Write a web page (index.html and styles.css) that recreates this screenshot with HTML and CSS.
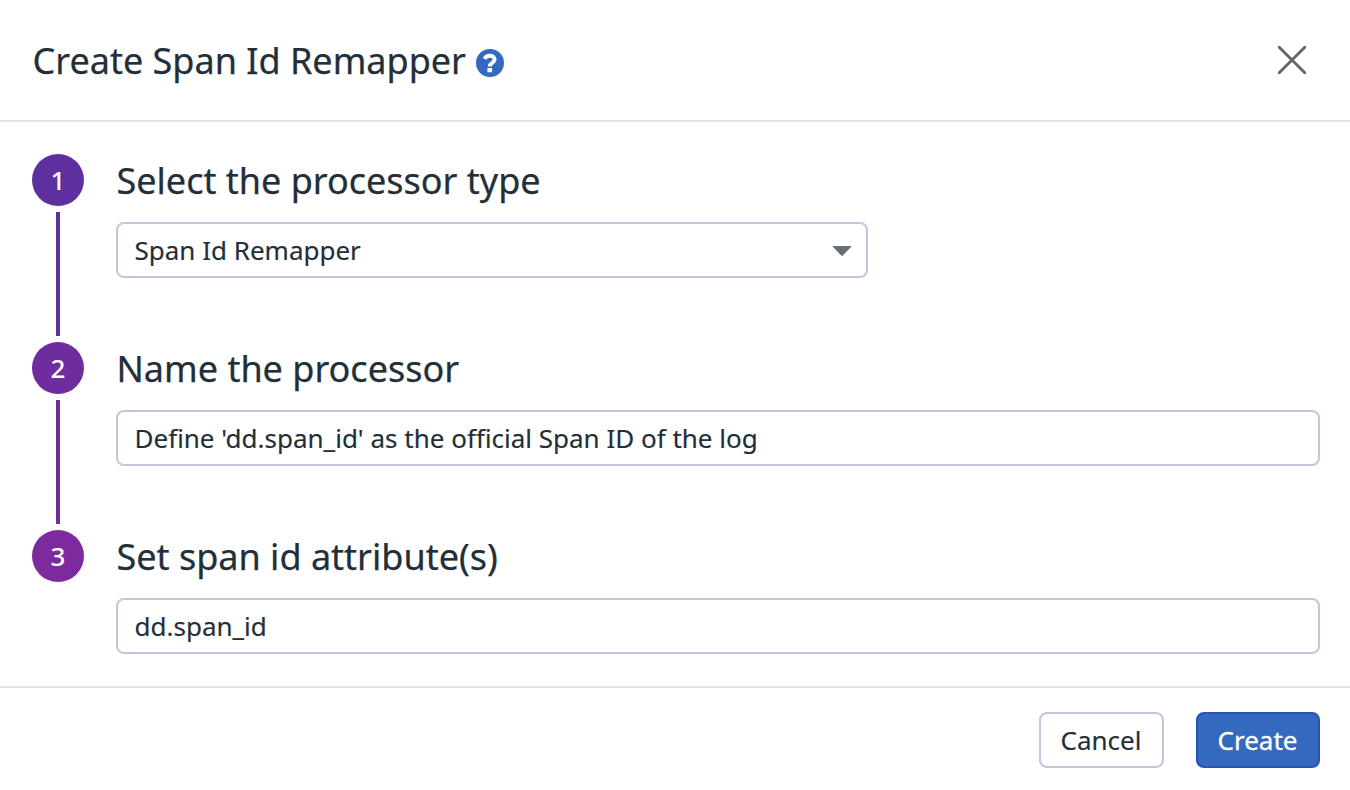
FILE: index.html
```
<!DOCTYPE html>
<html lang="en">
<head>
<meta charset="utf-8">
<title>Create Span Id Remapper</title>
<link rel="stylesheet" href="styles.css">
</head>
<body>
<div class="modal">
  <header class="header">
    <h1 class="title">Create Span Id Remapper</h1>
    <svg class="help" viewBox="0 0 28 28"><circle cx="14" cy="14" r="14" fill="#3369bf"/><path d="M8.6 9.8C9.6 7.6 11.4 6.7 13.8 6.7c2.8 0 4.8 1.5 4.8 3.8 0 3.4-4.9 3.2-4.9 6.9" fill="none" stroke="#fff" stroke-width="4"/><rect x="11.4" y="18.9" width="4.7" height="4.4" rx=".4" fill="#fff"/></svg>
    <svg class="close" viewBox="0 0 28 28"><path d="M1.2 1.2l25.6 25.6M26.8 1.2L1.2 26.8" stroke="#626a70" stroke-width="2.9" stroke-linecap="round"/></svg>
  </header>
  <main class="steps">
    <section class="step">
      <div class="rail"><span class="num num-1">1</span><span class="line line-1"></span></div>
      <div class="content">
        <h2 class="heading">Select the processor type</h2>
        <div class="field select">Span Id Remapper<svg class="caret" viewBox="0 0 20 12"><path d="M1.2 1h17.6q.6.2.2.9L10.8 10.6q-.8.6-1.6 0L1 1.9q-.4-.7.2-.9z" fill="#697177"/></svg></div>
      </div>
    </section>
    <section class="step">
      <div class="rail"><span class="num num-2">2</span><span class="line line-2"></span></div>
      <div class="content">
        <h2 class="heading">Name the processor</h2>
        <div class="field">Define 'dd.span_id' as the official Span ID of the log</div>
      </div>
    </section>
    <section class="step">
      <div class="rail"><span class="num num-3">3</span></div>
      <div class="content">
        <h2 class="heading">Set span id attribute(s)</h2>
        <div class="field">dd.span_id</div>
      </div>
    </section>
  </main>
  <footer class="footer">
    <button class="button">Cancel</button>
    <button class="button primary">Create</button>
  </footer>
</div>
</body>
</html>
```
FILE: styles.css
```
* { box-sizing: border-box; }
body { margin: 0; background: #fff; color: #232f38; font-family: "Noto Sans", sans-serif; -webkit-text-stroke: 0.25px; }
.modal { width: 1350px; height: 790px; display: flex; flex-direction: column; }
.header { height: 122px; display: flex; align-items: center; padding: 4px 44px 0 32.5px; border-bottom: 2px solid #e0e4e9; }
.title { margin: -2px 0 0; font-size: 36px; line-height: 48px; font-weight: 400; white-space: nowrap; }
.help { width: 28px; height: 28px; margin: 2px 0 0 10.5px; }
.close { width: 28px; height: 28px; margin: -4px 0 0 auto; }
.steps { height: 564px; padding: 32px 30px 0 32px; }
.step { height: 188px; display: flex; gap: 32px; }
.rail { width: 52px; display: flex; flex-direction: column; align-items: center; gap: 6px; }
.num { width: 52px; height: 52px; border-radius: 50%; color: #fff; font-size: 26px; line-height: 52px; text-align: center; font-weight: 500; -webkit-text-stroke: 0; }
.num-1 { background: #5d2f9f; }
.num-2 { background: #6f2c9f; }
.num-3 { background: #7d2a9f; }
.line { width: 4px; height: 124px; }
.line-1 { background: #5d2f9f; }
.line-2 { background: #6f2c9f; }
.content { flex: 1; }
.heading { margin: 2px 0 16px; padding-left: 0.5px; font-size: 36px; line-height: 50px; font-weight: 400; }
.field { height: 56px; border: 2px solid #c3c7de; border-radius: 8px; padding: 0 16.5px; font-size: 26px; line-height: 52px; white-space: nowrap; -webkit-text-stroke: 0.15px; }
.select { width: 752px; display: flex; justify-content: space-between; align-items: center; padding-right: 14px; }
.caret { width: 20px; height: 12px; margin-top: 2px; }
.footer { height: 104px; border-top: 2px solid #e0e4e9; padding: 24px 30px 0; display: flex; justify-content: flex-end; gap: 32px; }
.button { width: 125px; height: 56px; padding: 0 1px 0 0; border: 2px solid #c3c7de; border-radius: 8px; background: #fff; color: #232f38; font: 26px/52px "Noto Sans", sans-serif; -webkit-text-stroke: 0.15px; }
.primary { width: 124px; color: #fff; background: #3369bf; border-color: #2c50b8; -webkit-text-stroke: 0.3px; }
```
